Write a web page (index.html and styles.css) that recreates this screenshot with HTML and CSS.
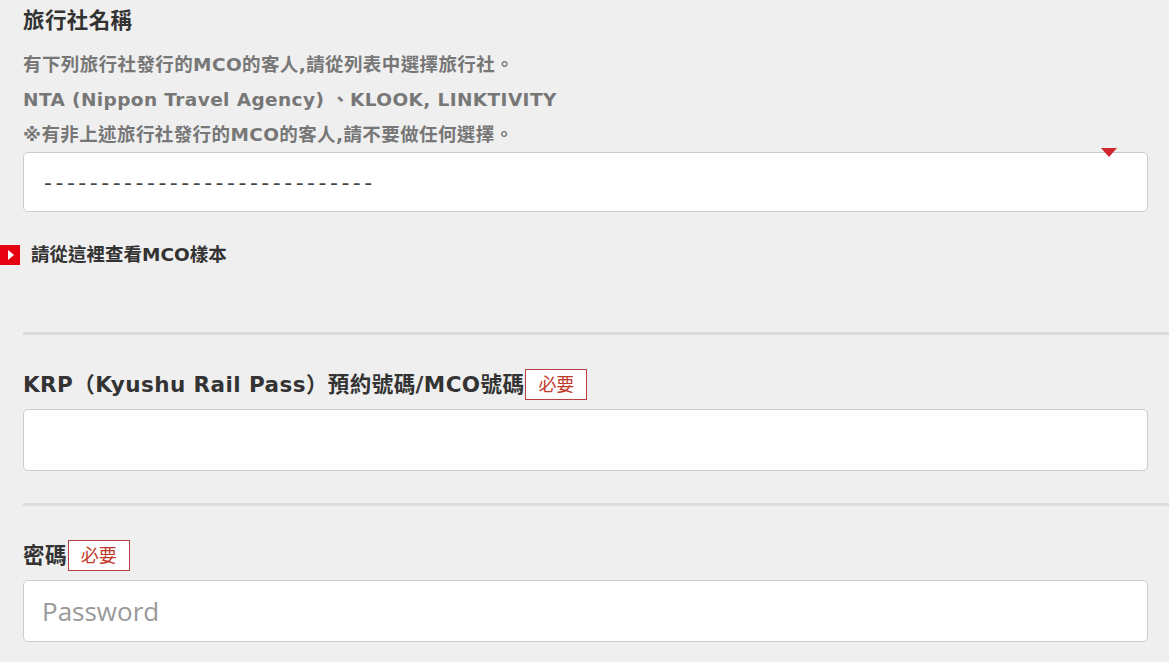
FILE: index.html
```html
<!DOCTYPE html>
<html lang="zh-Hant">
<head>
  <meta charset="UTF-8" />
  <meta name="viewport" content="width=device-width, initial-scale=1.0"/>
  <title>MCO</title>
  <link rel="stylesheet" href="styles.css">
</head>
<body>
  <div class="form">
    <div class="section first">
      <h2 class="title">旅行社名稱</h2>
      <p class="note">有下列旅行社發行的MCO的客人,請從列表中選擇旅行社。</p>
      <p class="note">NTA (Nippon Travel Agency) 、KLOOK, LINKTIVITY</p>
      <p class="note">※有非上述旅行社發行的MCO的客人,請不要做任何選擇。</p>
      <div class="select">
        <span class="select-text">-----------------------------</span>
        <span class="select-arrow"></span>
      </div>
      <a class="sample-link" href="#"><span class="link-icon"></span>請從這裡查看MCO樣本</a>
    </div>

    <div class="section bordered">
      <h2 class="label">KRP（Kyushu Rail Pass）預約號碼/MCO號碼<span class="required">必要</span></h2>
      <input class="field" type="text">
    </div>

    <div class="section bordered">
      <h2 class="label">密碼<span class="required">必要</span></h2>
      <input class="field" type="password" placeholder="Password">
    </div>
  </div>
</body>
</html>
```

FILE: styles.css
```css
body {
  margin: 0;
  background: #efefef;
  color: #333;
  font-family: 'DejaVu Sans', 'Noto Sans CJK TC', sans-serif;
}
.form {
  padding-left: 23px;
}
.section {
  padding-right: 21px;
}
.section.first {
  padding-bottom: 67px;
}
.section.bordered {
  border-top: 3px solid #dcdcdc;
  padding-top: 34px;
  padding-bottom: 32px;
}
.title {
  margin: 9px 0 14px;
  font-size: 21.5px;
  font-weight: bold;
  line-height: 24px;
  color: #333;
  letter-spacing: 0.4px;
}
.label {
  margin: 0;
  font-size: 21.5px;
  font-weight: bold;
  line-height: 31px;
  display: flex;
  align-items: center;
  color: #333;
  letter-spacing: 0.42px;
}
.note {
  margin: 0;
  font-size: 18.5px;
  font-weight: bold;
  line-height: 35px;
  color: #777;
  letter-spacing: 0.4px;
}
.select {
  position: relative;
  height: 58px;
  background: #fff;
  border: 1px solid #ccc;
  border-radius: 5px;
  display: flex;
  align-items: center;
  padding-left: 20px;
}
.select-text {
  font-size: 22px;
  color: #444;
  letter-spacing: 3.5px;
}
.select-arrow {
  position: absolute;
  top: -5px;
  right: 30px;
  width: 0;
  height: 0;
  border-left: 8px solid transparent;
  border-right: 8px solid transparent;
  border-top: 9px solid #d0262d;
}
.sample-link {
  display: flex;
  align-items: center;
  margin-top: 33px;
  margin-left: -23px;
  font-size: 18.5px;
  font-weight: bold;
  line-height: 20px;
  color: #333;
  text-decoration: none;
}
.link-icon {
  width: 20px;
  height: 20px;
  background: #e60012;
  margin-right: 11px;
  position: relative;
}
.link-icon::after {
  content: '';
  position: absolute;
  left: 8px;
  top: 5px;
  border-top: 5px solid transparent;
  border-bottom: 5px solid transparent;
  border-left: 6px solid #fff;
}
.required {
  display: inline-block;
  margin-left: 1px;
  padding: 0 12px;
  line-height: 29px;
  border: 1px solid #b84040;
  background: #fff;
  color: #c0392b;
  font-size: 18px;
  font-weight: normal;
  letter-spacing: 0;
}
.field {
  display: block;
  box-sizing: border-box;
  width: 100%;
  height: 62px;
  margin-top: 9px;
  background: #fff;
  border: 1px solid #ccc;
  border-radius: 5px;
  padding: 0 18px;
  font-family: 'Open Sans', 'Noto Sans CJK TC', sans-serif;
  font-size: 26px;
  color: #333;
}
.field::placeholder {
  color: #999;
}
```
